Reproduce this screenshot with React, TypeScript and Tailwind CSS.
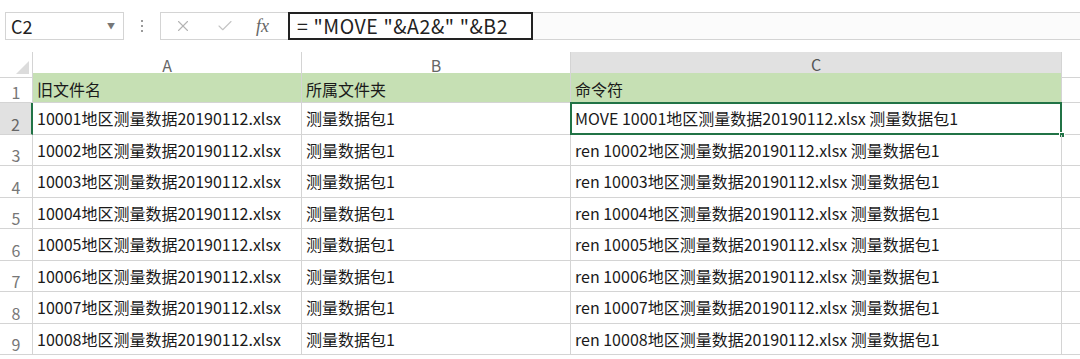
import { X, Check } from "lucide-react";

const FONT = { fontFamily: '"Noto Sans CJK SC", "Noto Sans", sans-serif' };

const rows = [
  { n: 2, a: "10001地区测量数据20190112.xlsx", b: "测量数据包1", c: "MOVE 10001地区测量数据20190112.xlsx 测量数据包1" },
  { n: 3, a: "10002地区测量数据20190112.xlsx", b: "测量数据包1", c: "ren 10002地区测量数据20190112.xlsx 测量数据包1" },
  { n: 4, a: "10003地区测量数据20190112.xlsx", b: "测量数据包1", c: "ren 10003地区测量数据20190112.xlsx 测量数据包1" },
  { n: 5, a: "10004地区测量数据20190112.xlsx", b: "测量数据包1", c: "ren 10004地区测量数据20190112.xlsx 测量数据包1" },
  { n: 6, a: "10005地区测量数据20190112.xlsx", b: "测量数据包1", c: "ren 10005地区测量数据20190112.xlsx 测量数据包1" },
  { n: 7, a: "10006地区测量数据20190112.xlsx", b: "测量数据包1", c: "ren 10006地区测量数据20190112.xlsx 测量数据包1" },
  { n: 8, a: "10007地区测量数据20190112.xlsx", b: "测量数据包1", c: "ren 10007地区测量数据20190112.xlsx 测量数据包1" },
  { n: 9, a: "10008地区测量数据20190112.xlsx", b: "测量数据包1", c: "ren 10008地区测量数据20190112.xlsx 测量数据包1" },
];

const cols = "grid grid-cols-[33px_269px_269px_491px_18px]";

export default function App() {
  return (
    <div className="w-[1080px] h-[359px] overflow-hidden bg-white text-[#1a1a1a]" style={FONT}>
      {/* Formula bar */}
      <div className="flex items-center h-[28px] mt-[12px]">
        <div className="ml-[5px] w-[119px] h-full border border-[#d4d4d4] flex items-center justify-between pl-[5px] pr-[8px]">
          <span className="text-[18px] text-[#222]">C2</span>
          <span className="text-[8px] text-[#777]">▼</span>
        </div>
        <div className="w-[36px] flex flex-col items-center gap-[3px]">
          <span className="w-[2px] h-[2px] bg-[#9a9a9a]" />
          <span className="w-[2px] h-[2px] bg-[#9a9a9a]" />
          <span className="w-[2px] h-[2px] bg-[#9a9a9a]" />
        </div>
        <div className="w-[128px] h-full border border-r-0 border-[#d4d4d4] flex items-center pl-[13px]">
          <X className="w-[18px] h-[18px] text-[#b4b4b4]" strokeWidth={1.5} />
          <Check className="w-[18px] h-[18px] text-[#c4c4c4] ml-[24px]" strokeWidth={1.5} />
          <span className="ml-[22px] text-[18px] italic text-[#666]" style={{ fontFamily: '"Liberation Serif", serif' }}>
            fx
          </span>
        </div>
        <div className="w-[245px] h-full border-2 border-[#222] flex items-center pl-[7px]">
          <span className="text-[19.5px] text-[#222] whitespace-pre tracking-[0.6px]">= "MOVE "&A2&" "&B2</span>
        </div>
        <div className="flex-1 h-full border-y border-[#d4d4d4] bg-[#fbfbfb]" />
      </div>

      {/* Column headers */}
      <div className={`${cols} mt-[12px] h-[21px] text-[16px] text-[#666]`}>
        <div className="border-r border-b border-[#d4d4d4] relative">
          <div className="absolute right-[3px] bottom-[3px] w-0 h-0 border-l-[13px] border-l-transparent border-b-[13px] border-b-[#dcdcdc]" />
        </div>
        <div className="border-r border-b border-[#d4d4d4] flex items-center justify-center">A</div>
        <div className="border-r border-b border-[#d4d4d4] flex items-center justify-center">B</div>
        <div className="bg-[#e1e1e1] border-r border-[#d4d4d4] border-b-2 border-b-[#217346] flex items-center justify-center text-[#555]">C</div>
        <div className="border-b border-[#d4d4d4]" />
      </div>

      {/* Row 1 */}
      <div className={`${cols} h-[30px] text-[16px]`}>
        <div className="border-r border-b border-[#d4d4d4] flex items-end justify-center pb-[2px] leading-none text-[16px] text-[#777]">1</div>
        <div className="bg-[#c6e0b4] border-r border-b border-[#d4d4d4] flex items-center pl-[4px] pt-[2px]">旧文件名</div>
        <div className="bg-[#c6e0b4] border-r border-b border-[#d4d4d4] flex items-center pl-[4px] pt-[2px]">所属文件夹</div>
        <div className="bg-[#c6e0b4] border-r border-[#d4d4d4] flex items-center pl-[4px] pt-[2px]">命令符</div>
        <div className="border-b border-[#d4d4d4]" />
      </div>

      {/* Data rows */}
      {rows.map((r) => {
        const sel = r.n === 2;
        return (
          <div key={r.n} className={`${cols} h-[31.5px] text-[16px]`}>
            <div
              className={
                sel
                  ? "bg-[#e1e1e1] border-r-2 border-r-[#217346] border-b border-b-[#d4d4d4] flex items-end justify-center pb-[2px] leading-none text-[16px] text-[#666]"
                  : "border-r border-b border-[#d4d4d4] flex items-end justify-center pb-[2px] leading-none text-[16px] text-[#777]"
              }
            >
              {r.n}
            </div>
            <div className="border-r border-b border-[#d4d4d4] flex items-center pl-[4px] whitespace-nowrap overflow-hidden">{r.a}</div>
            <div className="border-r border-b border-[#d4d4d4] flex items-center pl-[4px] whitespace-nowrap">{r.b}</div>
            <div className="relative border-r border-b border-[#d4d4d4] flex items-center pl-[4px] whitespace-nowrap">
              {r.c}
              {sel && (
                <>
                  <div className="absolute inset-[-1px] border-2 border-[#217346]" />
                  <div className="absolute right-[-4px] bottom-[-4px] w-[6px] h-[6px] bg-[#217346] border border-white" />
                </>
              )}
            </div>
            <div className="border-b border-[#d4d4d4]" />
          </div>
        );
      })}
    </div>
  );
}
